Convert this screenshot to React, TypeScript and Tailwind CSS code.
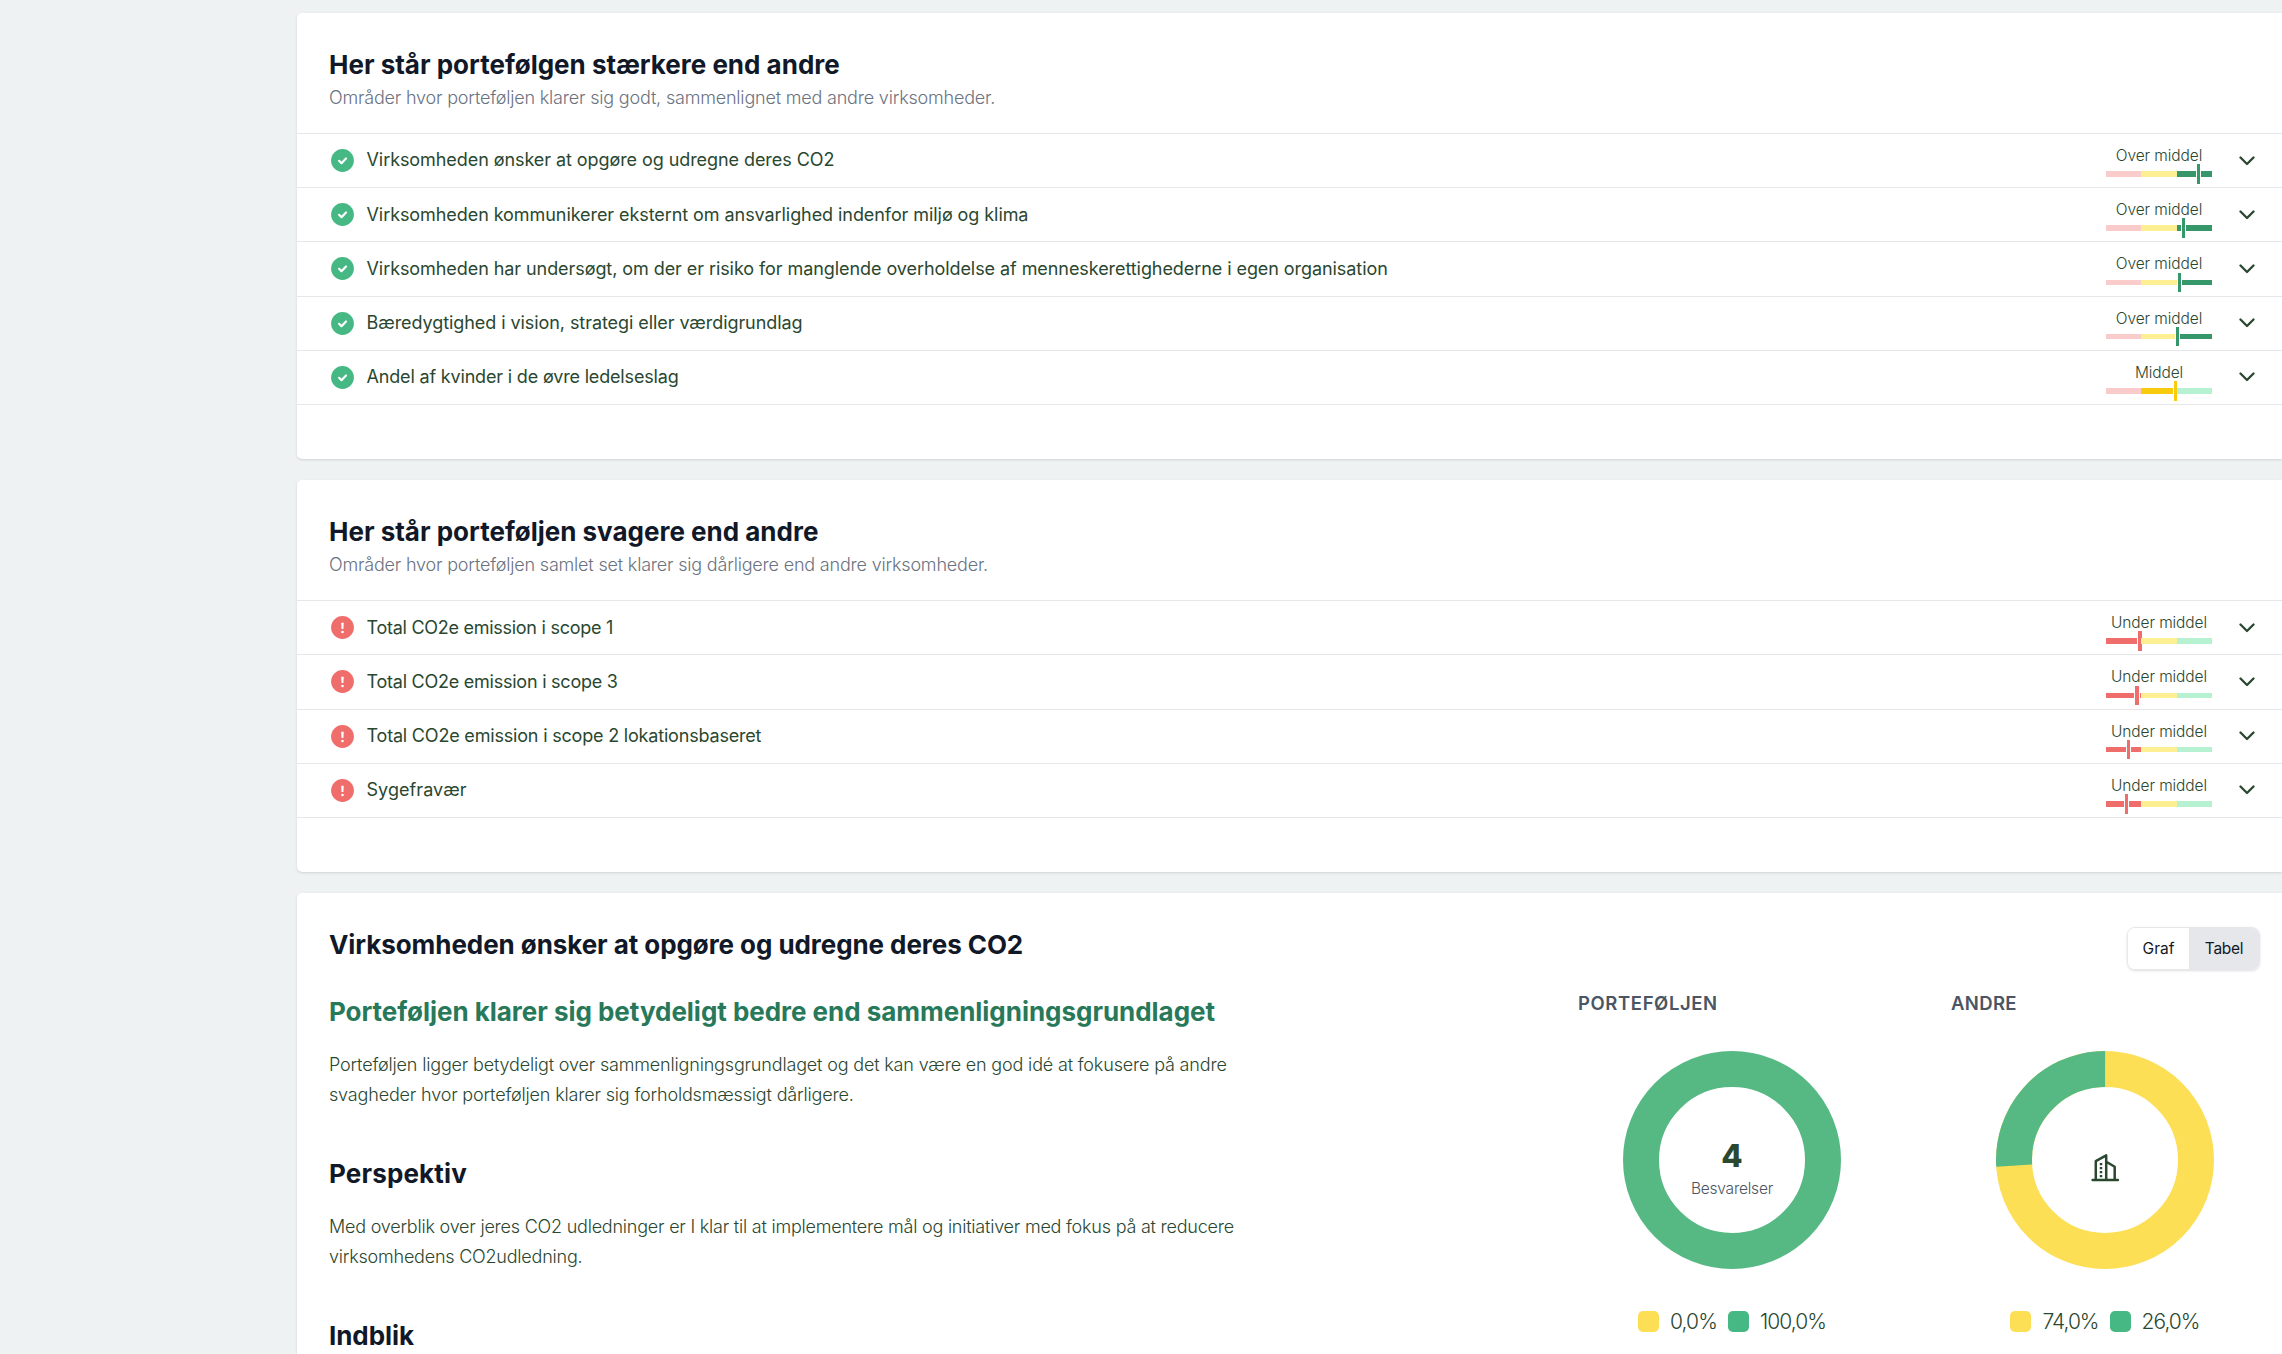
import React, { useState } from 'react';

type Level = 'low' | 'mid' | 'high';

interface Indicator {
    title: string;
    label: string;
    level: Level;
    // marker offset inside the active segment, in px
    offset: number;
    thick?: boolean;
    tracking?: string;
}

interface LegendItem {
    value: string;
    color: string;
    tracking: string;
}

const strengths: Indicator[] = [
    { title: 'Virksomheden ønsker at opgøre og udregne deres CO2', label: 'Over middel', level: 'high', offset: 20 },
    { title: 'Virksomheden kommunikerer eksternt om ansvarlighed indenfor miljø og klima', label: 'Over middel', level: 'high', offset: 5 },
    { title: 'Virksomheden har undersøgt, om der er risiko for manglende overholdelse af menneskerettighederne i egen organisation', label: 'Over middel', level: 'high', offset: 1 },
    { title: 'Bæredygtighed i vision, strategi eller værdigrundlag', label: 'Over middel', level: 'high', offset: -1 },
    { title: 'Andel af kvinder i de øvre ledelseslag', label: 'Middel', level: 'mid', offset: 33, tracking: 'tracking-[-0.17px]' },
];

const weaknesses: Indicator[] = [
    { title: 'Total CO2e emission i scope 1', label: 'Under middel', level: 'low', offset: 32, thick: true, tracking: 'tracking-[-0.27px]' },
    { title: 'Total CO2e emission i scope 3', label: 'Under middel', level: 'low', offset: 29, thick: true, tracking: 'tracking-[-0.24px]' },
    { title: 'Total CO2e emission i scope 2 lokationsbaseret', label: 'Under middel', level: 'low', offset: 21, tracking: 'tracking-[-0.19px]' },
    { title: 'Sygefravær', label: 'Under middel', level: 'low', offset: 19, tracking: 'tracking-[0.06px]' },
];

const segments: { level: Level; width: string; idle: string; active: string }[] = [
    { level: 'low', width: 'w-[35px]', idle: 'bg-[#f9cbcb]', active: 'bg-[#ef6d6b]' },
    { level: 'mid', width: 'w-[36px]', idle: 'bg-[#fdf092]', active: 'bg-[#f8cb0c]' },
    { level: 'high', width: 'w-[35px]', idle: 'bg-[#b6f1d1]', active: 'bg-[#36976a]' },
];

const CheckIcon = () => (
    <svg className="size-[23px] shrink-0" viewBox="0 0 23 23" fill="none">
        <circle cx="11.5" cy="11.5" r="11.4" fill="#45b883" />
        <path d="M8.1 11.8l2.4 2.4 4.5-4.7" stroke="#fff" strokeWidth="2.2" strokeLinecap="round" strokeLinejoin="round" />
    </svg>
);

const WarningIcon = () => (
    <svg className="size-[23px] shrink-0" viewBox="0 0 23 23" fill="none">
        <circle cx="11.5" cy="11.5" r="11.4" fill="#ef6d6b" />
        <path d="M10.2 6.7h2.6l-.4 6.4h-1.8z" fill="#fff" />
        <circle cx="11.5" cy="16" r="1.3" fill="#fff" />
    </svg>
);

const ChevronIcon = () => (
    <svg className="h-[10px] w-4 shrink-0" viewBox="0 0 16 10" fill="none">
        <path d="M1.5 1.5L8 8l6.5-6.5" stroke="#2a4730" strokeWidth="2.3" strokeLinecap="round" strokeLinejoin="round" />
    </svg>
);

const BuildingIcon = () => (
    <svg className="size-[30px]" viewBox="0 0 30 30" fill="none" stroke="#2a4730" strokeWidth="2.5">
        <path d="M2.6 27h25.2" strokeLinecap="round" />
        <path d="M5.8 27V8.2l10.4-5.8V27M16.3 8.8l8.4 5V27" strokeLinejoin="round" />
        <path d="M11 10v2.2M11 14v2.2M11 18v2.2M11 22v2.2" />
    </svg>
);

const Gauge: React.FC<{ item: Indicator }> = ({ item }) => (
    <div className="flex w-[106px] flex-col self-start pt-[12px]">
        <span className="text-center text-[15.5px] leading-[20px] font-light tracking-[-0.1px] whitespace-nowrap">
            {item.label}
        </span>
        <div className="mt-[5.2px] flex h-[5.6px]">
            {segments.map((s) => (
                <div key={s.level} className={`relative h-full ${s.width} ${s.level === item.level ? s.active : s.idle}`}>
                    {s.level === item.level && (
                        <div
                            className={`absolute -top-[7px] h-[19.6px] border-x border-white bg-clip-padding ${
                                item.thick ? 'w-[6px]' : 'w-[5px]'
                            } ${s.active}`}
                            style={{ left: item.offset - 1 }}
                        />
                    )}
                </div>
            ))}
        </div>
    </div>
);

interface IndicatorCardProps {
    title: string;
    description: string;
    items: Indicator[];
    icon: React.ReactNode;
    headClass: string;
    heightClass: string;
}

const IndicatorCard: React.FC<IndicatorCardProps> = ({ title, description, items, icon, headClass, heightClass }) => (
    <section className={`rounded-l-[5px] bg-white shadow-sm ${heightClass}`}>
        <div className={`pt-[34px] pl-8 ${headClass}`}>
            <h2 className="text-[26px] leading-[36px] font-bold whitespace-nowrap text-[#111827]">{title}</h2>
            <p className="mt-px text-[18px] leading-[27px] font-light tracking-[-0.19px] whitespace-nowrap text-[#6b7280]">
                {description}
            </p>
        </div>
        <ul className="border-b border-[#e5e7eb]">
            {items.map((item) => (
                <li key={item.title} className="flex h-[54.2px] items-center border-t border-[#e5e7eb] pr-[27px] pl-[34px]">
                    {icon}
                    <span
                        className={`ml-[12.5px] grow pb-[1.4px] text-[18px] leading-[27px] whitespace-nowrap ${
                            item.tracking ?? 'tracking-[-0.07px]'
                        }`}>
                        {item.title}
                    </span>
                    <Gauge item={item} />
                    <div className="ml-[27px]">
                        <ChevronIcon />
                    </div>
                </li>
            ))}
        </ul>
    </section>
);

interface DonutProps {
    title: string;
    titleClass: string;
    // share of the ring that is green, 0-1
    share: number;
    legend: LegendItem[];
    children: React.ReactNode;
}

const Donut: React.FC<DonutProps> = ({ title, titleClass, share, legend, children }) => {
    const r = 91;
    const length = 2 * Math.PI * r;

    return (
        <div className="w-[308px]">
            <h4 className={`text-[18.5px] leading-[27px] font-semibold text-[#4b5563] ${titleClass}`}>{title}</h4>
            <div className="relative mx-auto mt-[34px] size-[218px]">
                <svg className="size-full" viewBox="0 0 218 218" fill="none" strokeWidth="36">
                    <circle cx="109" cy="109" r={r} stroke={share < 1 ? '#fcdf54' : '#56b984'} />
                    {share < 1 && (
                        <circle
                            cx="109"
                            cy="109"
                            r={r}
                            stroke="#56b984"
                            strokeDasharray={`${share * length} ${length}`}
                            transform={`rotate(${-90 - share * 360} 109 109)`}
                        />
                    )}
                </svg>
                <div className="absolute inset-0 flex flex-col items-center">{children}</div>
            </div>
            <div className="mt-[42px] flex justify-center gap-[11px]">
                {legend.map((l) => (
                    <div key={l.value} className="flex items-center gap-[11px]">
                        <span className={`size-[21px] rounded-[5px] ${l.color}`} />
                        <span className={`text-[21px] leading-[21px] font-light ${l.tracking}`}>{l.value}</span>
                    </div>
                ))}
            </div>
        </div>
    );
};

const App: React.FC = () => {
    const [view, setView] = useState<'graf' | 'tabel'>('graf');

    return (
        <div className="h-[1354px] overflow-hidden bg-[#eef2f3] pt-[13px] pl-[297px] font-['Inter',sans-serif] text-[#2a4730]">
            <main className="flex flex-col gap-[21px]">
                <IndicatorCard
                    title="Her står portefølgen stærkere end andre"
                    description="Områder hvor porteføljen klarer sig godt, sammenlignet med andre virksomheder."
                    items={strengths}
                    icon={<CheckIcon />}
                    headClass="h-[120px]"
                    heightClass="h-[446px]"
                />
                <IndicatorCard
                    title="Her står porteføljen svagere end andre"
                    description="Områder hvor porteføljen samlet set klarer sig dårligere end andre virksomheder."
                    items={weaknesses}
                    icon={<WarningIcon />}
                    headClass="h-[120.2px]"
                    heightClass="h-[392px]"
                />

                <section className="flex h-[560px] justify-between rounded-l-[5px] bg-white pr-[22px] pl-8 shadow-sm">
                    <div className="pt-[33.5px] whitespace-nowrap">
                        <h2 className="text-[26px] leading-[36px] font-bold tracking-[-0.07px] text-[#111827]">
                            Virksomheden ønsker at opgøre og udregne deres CO2
                        </h2>
                        <h3 className="mt-[31.5px] text-[26px] leading-[36px] font-bold tracking-[-0.03px] text-[#27795a]">
                            Porteføljen klarer sig betydeligt bedre end sammenligningsgrundlaget
                        </h3>
                        <p className="mt-[19.5px] text-[18px] leading-[30px] font-light tracking-[-0.17px]">
                            Porteføljen ligger betydeligt over sammenligningsgrundlaget og det kan være en god idé at fokusere på andre
                            <br />
                            svagheder hvor porteføljen klarer sig forholdsmæssigt dårligere.
                        </p>
                        <h3 className="mt-[46.5px] text-[26px] leading-[36px] font-bold tracking-[0.16px] text-[#111827]">Perspektiv</h3>
                        <p className="mt-[19.5px] text-[18px] leading-[30px] font-light tracking-[-0.22px]">
                            Med overblik over jeres CO2 udledninger er I klar til at implementere mål og initiativer med fokus på at reducere
                            <br />
                            virksomhedens CO2udledning.
                        </p>
                        <h3 className="mt-[46.5px] text-[26px] leading-[36px] font-bold tracking-[-0.06px] text-[#111827]">Indblik</h3>
                    </div>

                    <div className="flex w-[682px] shrink-0 flex-col pt-[34px]">
                        <div className="flex h-[43px] w-[133px] self-end overflow-hidden rounded-[8px] border border-[#e5e7eb] text-[15.5px] text-[#111827] shadow-sm">
                            <button
                                onClick={() => setView('graf')}
                                className={`w-[61px] ${view === 'graf' ? 'bg-white' : 'bg-[#e5e7eb]'}`}>
                                Graf
                            </button>
                            <button
                                onClick={() => setView('tabel')}
                                className={`grow tracking-[-0.3px] ${view === 'tabel' ? 'bg-white' : 'bg-[#e5e7eb]'}`}>
                                Tabel
                            </button>
                        </div>
                        <div className="mt-5 flex gap-[65px]">
                            <Donut
                                title="PORTEFØLJEN"
                                titleClass="tracking-[0.6px]"
                                share={1}
                                legend={[
                                    { value: '0,0%', color: 'bg-[#fcdf54]', tracking: 'tracking-[-0.87px]' },
                                    { value: '100,0%', color: 'bg-[#45b883]', tracking: 'tracking-[-0.95px]' },
                                ]}>
                                <span className="mt-[87px] text-[31px] leading-[36px] font-extrabold">4</span>
                                <span className="mt-[4px] text-[15.5px] leading-[22px] font-light tracking-[-0.23px] text-[#4b5563]">
                                    Besvarelser
                                </span>
                            </Donut>
                            <Donut
                                title="ANDRE"
                                titleClass="tracking-[0.35px]"
                                share={0.26}
                                legend={[
                                    { value: '74,0%', color: 'bg-[#fcdf54]', tracking: 'tracking-[-1px]' },
                                    { value: '26,0%', color: 'bg-[#45b883]', tracking: 'tracking-[-0.97px]' },
                                ]}>
                                <div className="mt-[102px]">
                                    <BuildingIcon />
                                </div>
                            </Donut>
                        </div>
                    </div>
                </section>
            </main>
        </div>
    );
};

export default App;
